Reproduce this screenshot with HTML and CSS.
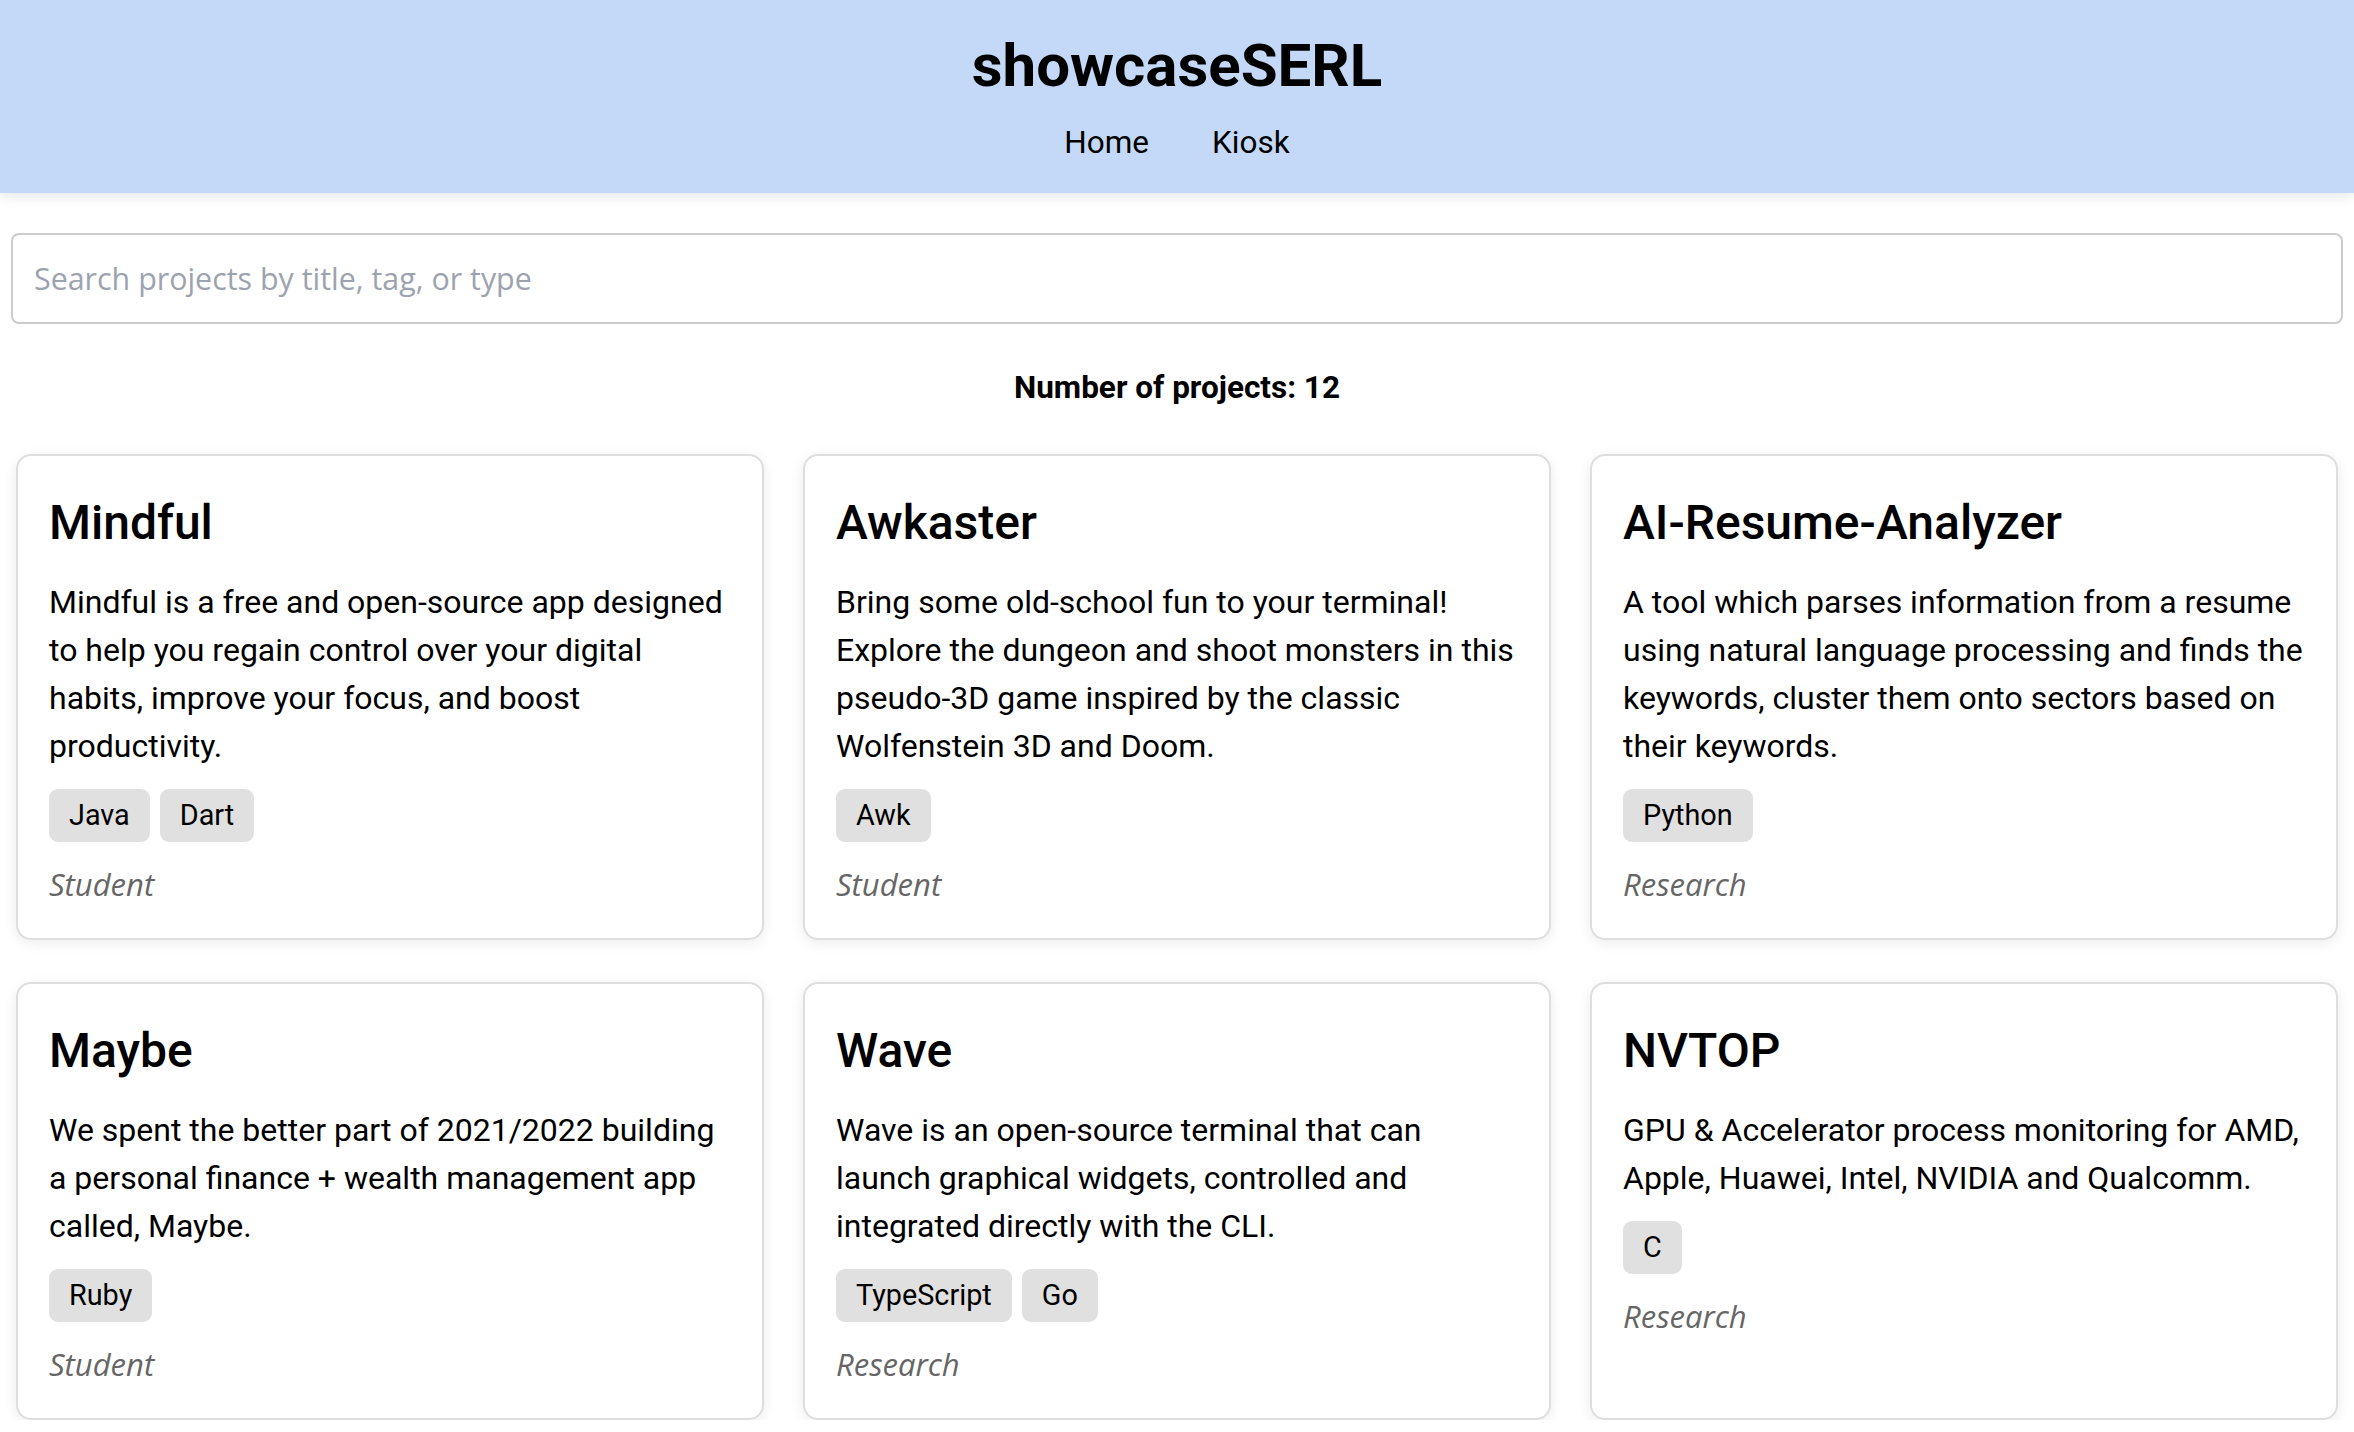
FILE: index.html
```html
<!DOCTYPE html>
<html lang="en">
<head>
<meta charset="utf-8">
<title>showcaseSERL</title>
<link rel="stylesheet" href="styles.css">
</head>
<body>
<header class="site-header">
  <h1 class="site-title">showcaseSERL</h1>
  <nav class="site-nav">
    <a href="#" class="nav-link">Home</a>
    <a href="#" class="nav-link">Kiosk</a>
  </nav>
</header>
<main class="content">
  <input class="search" type="text" placeholder="Search projects by title, tag, or type">
  <p class="count">Number of projects: 12</p>
  <section class="grid">
    <article class="card">
      <h2 class="card-title">Mindful</h2>
      <p class="card-desc">Mindful is a free and open-source app designed to help you regain control over your digital habits, improve your focus, and boost productivity.</p>
      <div class="tags"><span class="tag">Java</span><span class="tag">Dart</span></div>
      <p class="card-type">Student</p>
    </article>
    <article class="card">
      <h2 class="card-title">Awkaster</h2>
      <p class="card-desc">Bring some old-school fun to your terminal! Explore the dungeon and shoot monsters in this pseudo-3D game inspired by the classic Wolfenstein 3D and Doom.</p>
      <div class="tags"><span class="tag">Awk</span></div>
      <p class="card-type">Student</p>
    </article>
    <article class="card">
      <h2 class="card-title">AI-Resume-Analyzer</h2>
      <p class="card-desc">A tool which parses information from a resume using natural language processing and finds the keywords, cluster them onto sectors based on their keywords.</p>
      <div class="tags"><span class="tag">Python</span></div>
      <p class="card-type">Research</p>
    </article>
    <article class="card">
      <h2 class="card-title">Maybe</h2>
      <p class="card-desc">We spent the better part of 2021/2022 building a personal finance + wealth management app called, Maybe.</p>
      <div class="tags"><span class="tag">Ruby</span></div>
      <p class="card-type">Student</p>
    </article>
    <article class="card">
      <h2 class="card-title">Wave</h2>
      <p class="card-desc">Wave is an open-source terminal that can launch graphical widgets, controlled and integrated directly with the CLI.</p>
      <div class="tags"><span class="tag">TypeScript</span><span class="tag">Go</span></div>
      <p class="card-type">Research</p>
    </article>
    <article class="card">
      <h2 class="card-title">NVTOP</h2>
      <p class="card-desc">GPU &amp; Accelerator process monitoring for AMD, Apple, Huawei, Intel, NVIDIA and Qualcomm.</p>
      <div class="tags"><span class="tag">C</span></div>
      <p class="card-type">Research</p>
    </article>
  </section>
</main>
</body>
</html>
```

FILE: styles.css
```css
* { box-sizing: border-box; }

html, body {
  margin: 0;
  padding: 0;
  background: #ffffff;
}

body {
  font-family: Roboto, "Liberation Sans", sans-serif;
  color: #000;
  overflow: hidden;
}

.site-header {
  background: #c4d9f8;
  text-align: center;
  padding: 31px 0 32px;
  box-shadow: 0 3px 12px rgba(0, 0, 0, 0.1);
  position: relative;
  z-index: 1;
}

.site-title {
  margin: 0;
  font-size: 60px;
  font-weight: 700;
  line-height: 70px;
  color: #000;
}

.site-nav {
  display: flex;
  justify-content: center;
  gap: 63px;
  margin-top: 23px;
}

.nav-link {
  font-size: 31.5px;
  line-height: 37px;
  color: #000;
  text-decoration: none;
}

.content {
  padding: 40px 11px 0;
}

.search {
  display: block;
  width: 100%;
  height: 91px;
  border: 2px solid #cccccc;
  border-radius: 8px;
  padding: 0 21px;
  font-family: "Open Sans", sans-serif;
  font-size: 30.4px;
  color: #222;
  background: #fff;
  outline: none;
}

.search::placeholder {
  color: #9ca3af;
}

.count {
  margin: 47px 0 0;
  text-align: center;
  font-size: 31.5px;
  font-weight: 700;
  line-height: 34px;
}

.grid {
  display: grid;
  grid-template-columns: repeat(3, 1fr);
  column-gap: 39px;
  row-gap: 42px;
  padding: 0 5px;
  margin-top: 49px;
}

.card {
  border: 2px solid #dedede;
  border-radius: 15px;
  background: #fff;
  padding: 31px 32px 33px 31px;
  box-shadow: 0 3px 14px rgba(0, 0, 0, 0.08);
}

.card-title {
  margin: 8px 0 0;
  font-size: 48px;
  font-weight: 500;
  line-height: 56px;
}

.card-desc {
  margin: 27px 0 0;
  font-size: 32px;
  line-height: 48px;
}

.tags {
  display: flex;
  gap: 10px;
  margin-top: 19px;
}

.tag {
  background: #e0e0e0;
  border-radius: 9px;
  padding: 0 20px;
  height: 53px;
  line-height: 53px;
  font-size: 28.8px;
}

.card-type {
  margin: 22px 0 0;
  font-family: "Open Sans", sans-serif;
  font-style: italic;
  font-size: 31px;
  line-height: 41px;
  color: #666;
}
```
